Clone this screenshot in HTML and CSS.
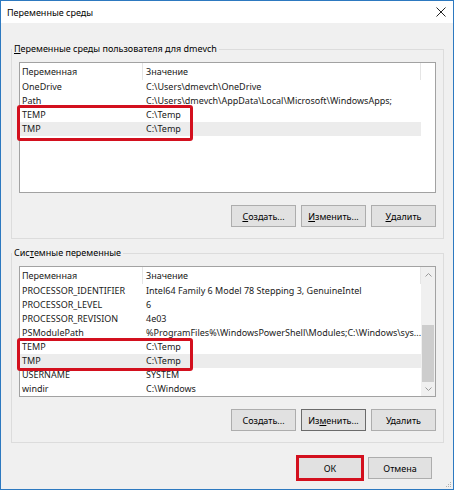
FILE: index.html
```html
<!DOCTYPE html>
<html lang="ru">
<head>
<meta charset="utf-8">
<title>Переменные среды</title>
<link rel="stylesheet" href="styles.css">
</head>
<body>
<div class="window">
  <div class="titlebar">
    <span class="title">Переменные среды</span>
    <svg class="close" width="10" height="10" viewBox="0 0 10 10"><path d="M0.5 0.5 L9.5 9.5 M9.5 0.5 L0.5 9.5" stroke="#222" stroke-width="1" fill="none"/></svg>
  </div>
  <div class="content">
    <section class="group">
      <div class="group-label"><u>П</u>еременные среды пользователя для dmevch</div>
      <div class="list">
        <div class="table">
          <div class="list-head"><div class="col1">Переменная</div><div class="col2">Значение</div></div>
          <div class="row"><div class="col1">OneDrive</div><div class="col2">C:\Users\dmevch\OneDrive</div></div>
          <div class="row"><div class="col1">Path</div><div class="col2">C:\Users\dmevch\AppData\Local\Microsoft\WindowsApps;</div></div>
          <div class="mark">
            <div class="row"><div class="col1">TEMP</div><div class="col2">C:\Temp</div></div>
            <div class="row sel"><div class="col1">TMP</div><div class="col2">C:\Temp</div></div>
            <span class="mark-box"></span>
          </div>
        </div>
      </div>
      <div class="buttons">
        <button class="btn"><u>С</u>оздать...</button>
        <button class="btn"><u>И</u>зменить...</button>
        <button class="btn"><u>У</u>далить</button>
      </div>
    </section>
    <section class="group">
      <div class="group-label">Сис<u>т</u>емные переменные</div>
      <div class="list">
        <div class="table">
          <div class="list-head"><div class="col1">Переменная</div><div class="col2">Значение</div></div>
          <div class="row"><div class="col1">PROCESSOR_IDENTIFIER</div><div class="col2">Intel64 Family 6 Model 78 Stepping 3, GenuineIntel</div></div>
          <div class="row"><div class="col1">PROCESSOR_LEVEL</div><div class="col2">6</div></div>
          <div class="row"><div class="col1">PROCESSOR_REVISION</div><div class="col2">4e03</div></div>
          <div class="row"><div class="col1">PSModulePath</div><div class="col2">%ProgramFiles%\WindowsPowerShell\Modules;C:\Windows\sys...</div></div>
          <div class="mark">
            <div class="row"><div class="col1">TEMP</div><div class="col2">C:\Temp</div></div>
            <div class="row sel"><div class="col1">TMP</div><div class="col2">C:\Temp</div></div>
            <span class="mark-box mark-box-sys"></span>
          </div>
          <div class="row"><div class="col1">USERNAME</div><div class="col2">SYSTEM</div></div>
          <div class="row"><div class="col1">windir</div><div class="col2">C:\Windows</div></div>
        </div>
        <div class="scrollbar">
          <div class="sb-arrow sb-up"><svg width="7" height="4" viewBox="0 0 7 4"><path d="M0.5 3.5 L3.5 0.5 L6.5 3.5" stroke="#9a9a9a" fill="none"/></svg></div>
          <div class="sb-track"><div class="sb-thumb"></div></div>
          <div class="sb-arrow sb-down"><svg width="7" height="4" viewBox="0 0 7 4"><path d="M0.5 0.5 L3.5 3.5 L6.5 0.5" stroke="#9a9a9a" fill="none"/></svg></div>
        </div>
      </div>
      <div class="buttons">
        <button class="btn">Создать...</button>
        <button class="btn focus">Из<u>м</u>енить...</button>
        <button class="btn">Удалить</button>
      </div>
    </section>
    <div class="footer">
      <button class="btn ok">ОК</button>
      <button class="btn">Отмена</button>
    </div>
  </div>
  <svg class="grip" width="7" height="7" viewBox="0 0 7 7">
    <rect x="5" y="1" width="1" height="1" fill="#b0b0b0"/>
    <rect x="3" y="3" width="1" height="1" fill="#b0b0b0"/>
    <rect x="5" y="3" width="1" height="1" fill="#b0b0b0"/>
    <rect x="1" y="5" width="1" height="1" fill="#b0b0b0"/>
    <rect x="3" y="5" width="1" height="1" fill="#b0b0b0"/>
    <rect x="5" y="5" width="1" height="1" fill="#b0b0b0"/>
  </svg>
</div>
</body>
</html>
```
FILE: styles.css
```css
* { box-sizing: border-box; }
html, body { margin: 0; padding: 0; }
body {
  width: 454px;
  height: 490px;
  font-family: "Noto Sans", "Open Sans", sans-serif;
  font-size: 9px;
  color: #1a1a1a;
  background: #fff;
}
.window {
  width: 454px;
  height: 490px;
  border: 1px solid #2d79c0;
  background: #f0f0f0;
  display: flex;
  flex-direction: column;
  position: relative;
}
.titlebar {
  height: 22px;
  flex: none;
  background: #fff;
  display: flex;
  align-items: center;
  justify-content: space-between;
  padding: 0 7px 0 6px;
}
.title { color: #000; font-size: 9px; }
.close { display: block; }
.content { padding-top: 26px; flex: 1; }
.group {
  border: 1px solid #dcdcdc;
  margin: 0 9px 0 10px;
  padding: 0 7px 11px;
}
.group + .group { margin-top: 14px; }
.group-label {
  margin-top: -8px;
  margin-left: -7px;
  line-height: 14px;
  height: 14px;
  background: #f0f0f0;
  width: fit-content;
  padding: 0 2px;
  color: #000;
}
.list {
  margin-top: 6px;
  height: 131px;
  border: 1px solid #a2a2a2;
  background: #fff;
  display: flex;
}
.table { width: 401px; flex: none; }
.list-head, .row {
  display: grid;
  grid-template-columns: 123px 278px;
}
.list-head { height: 17px; line-height: 17px; }
.list-head > div { border-right: 1px solid #e5e5e5; }
.row { height: 14px; line-height: 14px; }
.row.sel { background: #ececec; }
.col1 { padding-left: 2px; white-space: nowrap; overflow: hidden; }
.col2 { padding-left: 3px; white-space: nowrap; overflow: hidden; }
.mark { position: relative; }
.mark-box {
  position: absolute;
  left: -3px;
  top: -3px;
  width: 176px;
  height: 36px;
  border: 3px solid #d3101e;
  border-radius: 3px;
}
.mark-box-sys { top: -2px; height: 33px; }
.scrollbar {
  flex: 1;
  display: flex;
  flex-direction: column;
  background: #f0f0f0;
}
.sb-arrow {
  display: flex;
  align-items: center;
  justify-content: center;
}
.sb-up { height: 15px; }
.sb-down { height: 14px; }
.sb-arrow svg { display: block; }
.sb-track {
  flex: 1;
  display: flex;
  flex-direction: column;
  justify-content: flex-end;
  padding: 0 1px;
}
.sb-thumb { height: 57px; background: #cdcdcd; }
.buttons {
  display: flex;
  justify-content: flex-end;
  gap: 5px;
  margin-top: 12px;
}
.btn {
  width: 65px;
  height: 22px;
  background: #e1e1e1;
  border: 1px solid #adadad;
  font: inherit;
  color: #000;
  padding: 0;
  display: flex;
  align-items: center;
  justify-content: center;
}
.btn.focus { border-color: #6b6b6b; }
.footer {
  display: flex;
  justify-content: flex-end;
  gap: 6px;
  margin-top: 14px;
  padding-right: 21px;
}
.footer .btn { width: 64px; }
.btn.ok {
  outline: 3px solid #d3101e;
  outline-offset: -1px;
}
.grip {
  position: absolute;
  right: 1px;
  bottom: 1px;
  display: block;
}
```
